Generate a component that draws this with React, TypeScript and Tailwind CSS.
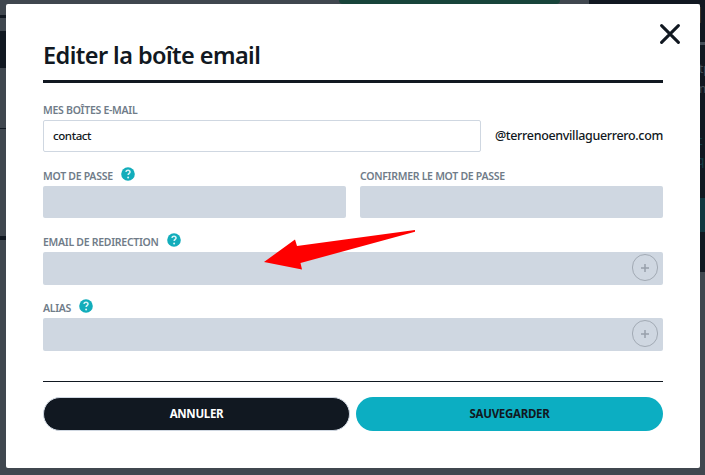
import type { ReactNode } from "react";

function HelpIcon({ className }: { className: string }) {
    return (
        <svg viewBox="0 0 14 14" className={`h-3.5 w-3.5 shrink-0 ${className}`}>
            <circle cx="7" cy="7" r="6.8" fill="#12adbb" />
            <path d="M4.9 4.9C5.1 3.8 5.9 3.2 7 3.2c1.2 0 2 .7 2 1.7 0 1.5-1.8 1.5-1.8 3.2" fill="none" stroke="#d8f3f5" strokeWidth="1.6" />
            <circle cx="7.1" cy="10.4" r="1" fill="#d8f3f5" />
        </svg>
    );
}

function Label({ children, icon }: { children: ReactNode; icon?: boolean }) {
    return (
        <div className="flex h-[34px] items-end">
            <span className="whitespace-nowrap pb-1 text-[10.5px] font-semibold leading-3 tracking-[-0.28px] text-[#707c89]">{children}</span>
            {icon && <HelpIcon className="mb-[5.5px] ml-2" />}
        </div>
    );
}

function AddField() {
    return (
        <div className="flex h-[33px] items-center justify-end rounded-[2px] bg-[#cfd7e1] pb-[2px] pr-[5px]">
            <button className="flex h-[27px] w-[26px] items-center justify-center rounded-full border border-[#a2aab4]">
                <svg viewBox="0 0 8 8" className="h-2 w-2 stroke-[#98a0aa]">
                    <path d="M4 0v8M0 4h8" strokeWidth="1.5" />
                </svg>
            </button>
        </div>
    );
}

function Backdrop() {
    return (
        <div className="absolute inset-0 flex flex-col overflow-hidden bg-[#40474f]">
            <div className="flex h-1 shrink-0">
                <div className="ml-[339px] h-1 w-[221px] rounded-b bg-[#18443a]" />
                <div className="ml-[29px] h-1 flex-1 bg-[#111821]" />
            </div>
            <div className="flex justify-between">
                <div className="w-1.5">
                    <div className="mt-[11px] h-[3px] bg-[#111821]" />
                    <div className="mt-[13px] h-[37px] bg-[#111821]" />
                    <div className="mt-[60px] h-px bg-[#111821]" />
                    <div className="mt-[107px] h-1 bg-[#111821]" />
                </div>
                <div className="h-[268px] w-[5px] overflow-hidden bg-[#111821] text-[12px] leading-5 text-[#444d57]">
                    <div className="-ml-1 -mt-1 h-[39px] text-[22px] font-semibold leading-7">l</div>
                    <div className="mt-[3px] h-[3px] bg-[#444d57]" />
                    <div className="-ml-px mt-[14px]">tp</div>
                    <div className="-ml-[5px]">m</div>
                    <div className="-ml-[3px] mt-[32px] text-[#143d46]">c</div>
                    <div className="-ml-[3px] text-[#143d46]">q</div>
                    <div className="mt-[27px] h-[34px] bg-[#123841]" />
                </div>
            </div>
        </div>
    );
}

export default function App() {
    return (
        <div className="relative h-[475px] w-[705px] overflow-hidden font-['Noto_Sans','Open_Sans',sans-serif] text-[#111821]">
            <Backdrop />
            <div className="relative ml-1.5 mt-1 h-[464px] w-[694px] rounded-[2px] bg-white px-[37px]">
                <header className="flex h-[79px] items-end justify-between border-b-[3px] border-[#111821]">
                    <h1 className="whitespace-nowrap pb-[9px] text-[23.5px] font-semibold leading-8 tracking-[-0.57px]">Editer la boîte email</h1>
                    <button className="-mr-[17px] mb-9">
                        <svg viewBox="0 0 20 20" className="h-5 w-5 stroke-[#111821]">
                            <path d="M1.6 1.6l16.8 16.8M18.4 1.6L1.6 18.4" fill="none" strokeWidth="3" strokeLinecap="round" />
                        </svg>
                    </button>
                </header>
                <div className="pt-[3px]">
                    <Label>MES BOÎTES E-MAIL</Label>
                    <div className="flex h-8 items-center justify-between">
                        <div className="flex h-8 w-[438px] items-center rounded-[2px] border border-[#cfd7e1] px-[9px] text-[11.5px] font-medium tracking-[-0.4px]">
                            contact
                        </div>
                        <span className="text-[12.5px] font-medium tracking-[-0.33px]">@terrenoenvillaguerrero.com</span>
                    </div>
                </div>
                <div className="grid grid-cols-2 gap-[14px]">
                    <div>
                        <Label icon>MOT DE PASSE</Label>
                        <div className="h-8 rounded-[2px] bg-[#cfd7e1]" />
                    </div>
                    <div>
                        <Label>CONFIRMER LE MOT DE PASSE</Label>
                        <div className="h-8 rounded-[2px] bg-[#cfd7e1]" />
                    </div>
                </div>
                <Label icon>EMAIL DE REDIRECTION</Label>
                <AddField />
                <div className="-mt-px">
                    <Label icon>ALIAS</Label>
                </div>
                <AddField />
                <footer className="mt-[30px] grid grid-cols-2 gap-1.5 border-t border-[#111821] pt-[15px] text-[11.5px] font-bold tracking-[-0.3px]">
                    <button className="h-[34px] rounded-full border border-[#cfd7e1] bg-[#111821] text-white">ANNULER</button>
                    <button className="h-[34px] rounded-full bg-[#0caec2]">SAUVEGARDER</button>
                </footer>
            </div>
            {/* Red pointer towards the redirection field */}
            <svg viewBox="0 0 152 42" className="absolute left-[264px] top-[230px] h-[42px] w-[152px]">
                <path d="M151 0L33 16L31 9.5L0 32L38 39.5L36.5 33L151 1.8Z" fill="#ff0000" />
            </svg>
        </div>
    );
}
